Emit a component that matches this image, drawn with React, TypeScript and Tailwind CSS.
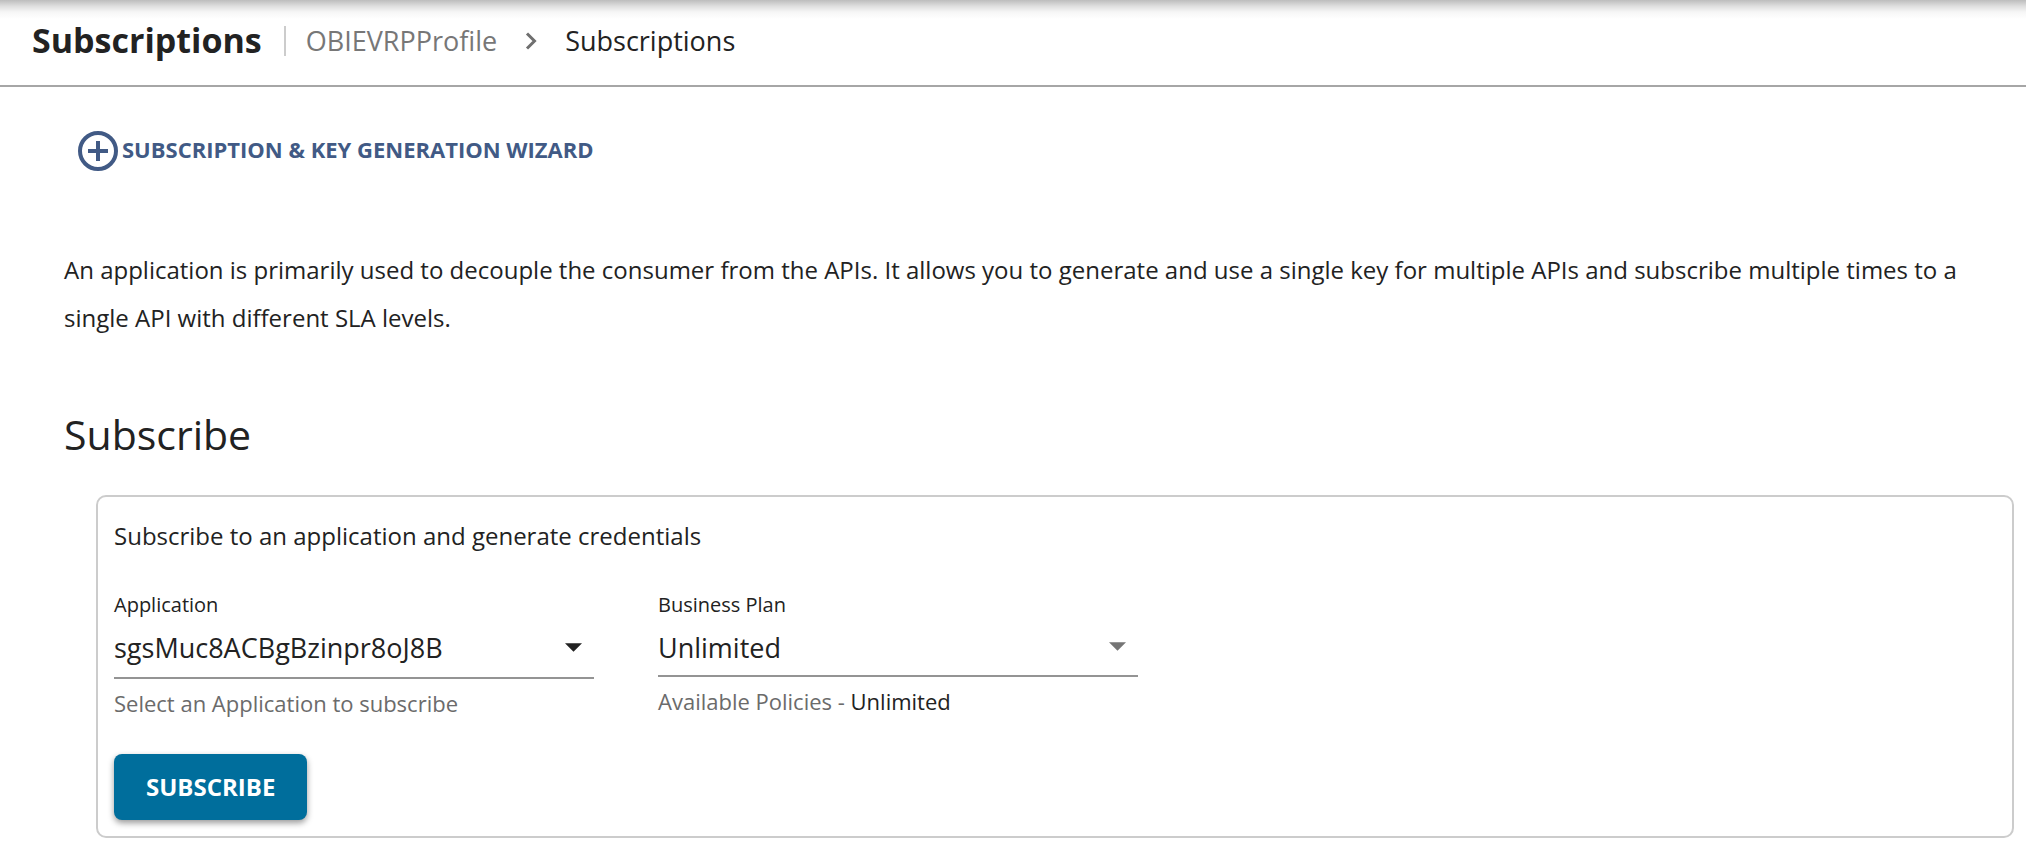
import type { ReactNode } from "react";

type SelectFieldProps = {
  id: string;
  label: string;
  options: string[];
  arrowClass: string;
  selectClass: string;
  helper: ReactNode;
};

function SelectField({ id, label, options, arrowClass, selectClass, helper }: SelectFieldProps) {
  return (
    <div className="w-full max-w-[480px]">
      <label htmlFor={id} className="block text-[20px] leading-8">
        {label}
      </label>
      <div className="grid items-center">
        <select
          id={id}
          aria-describedby={`${id}-helper`}
          className={`col-start-1 row-start-1 w-full appearance-none rounded-none border-b-2 border-[#949494] bg-transparent pr-12 text-[27px] leading-10 outline-none ${selectClass}`}
        >
          {options.map((option) => (
            <option key={option}>{option}</option>
          ))}
        </select>
        <svg
          viewBox="0 0 20 10"
          aria-hidden="true"
          className={`pointer-events-none col-start-1 row-start-1 mb-1.5 mr-3 h-[9px] w-[17px] justify-self-end ${arrowClass}`}
        >
          <path d="M0 0h20L10 10z" fill="currentColor" />
        </svg>
      </div>
      <p id={`${id}-helper`} className="mt-1.5 text-[22px] leading-9 text-[#6b6b6b]">
        {helper}
      </p>
    </div>
  );
}

export default function App() {
  return (
    <div className="min-h-screen bg-white font-['Open_Sans',sans-serif] text-[#222222]">
      <header className="flex h-[87px] items-start border-b-2 border-[#a6a6a6] bg-[linear-gradient(to_bottom,#bdbdbd_0px,#dedede_6px,#f6f6f6_12px,#ffffff_19px)] pl-8 pt-4">
        <h1 className="text-[34px] font-bold leading-12">Subscriptions</h1>
        <nav aria-label="Breadcrumb" className="ml-[22px] mt-2.5 flex h-[30px] items-center border-l-2 border-[#cccccc] pl-5 text-[27px]">
          <a href="#profile" className="text-[#777777]">
            OBIEVRPProfile
          </a>
          <svg viewBox="0 0 12 18" aria-hidden="true" className="mx-7 h-[18px] w-3 text-[#6f6f6f]">
            <path d="M2 1.5L9.5 9L2 16.5" fill="none" stroke="currentColor" strokeWidth="3" />
          </svg>
          <span aria-current="page">Subscriptions</span>
        </nav>
      </header>

      <main className="pl-16 pr-3 pt-11">
        <button type="button" className="ml-3.5 flex items-center gap-1 text-[22px] font-bold text-[#415a85]">
          <svg viewBox="0 0 40 40" aria-hidden="true" className="size-10">
            <circle cx="20" cy="20" r="18" fill="none" stroke="currentColor" strokeWidth="4" />
            <path d="M20 10v20M10 20h20" stroke="currentColor" strokeWidth="4" />
          </svg>
          <span className="pb-1 leading-9">SUBSCRIPTION &amp; KEY GENERATION WIZARD</span>
        </button>

        <p className="mt-[75px] pr-10 text-[24px] leading-12">
          An application is primarily used to decouple the consumer from the APIs. It allows you to generate and use a
          single key for multiple APIs and subscribe multiple times to a single API with different SLA levels.
        </p>

        <h2 className="mt-16 text-[41px] leading-14">Subscribe</h2>

        <section className="ml-8 mt-[33px] rounded-[10px] border-2 border-[#cccccc] p-4">
          <p className="pt-[7px] text-[24px] leading-8">Subscribe to an application and generate credentials</p>
          <form onSubmit={(event) => event.preventDefault()}>
            <div className="mt-[37px] flex gap-16">
              <SelectField
                id="application"
                label="Application"
                options={["sgsMuc8ACBgBzinpr8oJ8B"]}
                arrowClass="text-[#222222]"
                selectClass="h-[58px] pb-0.5"
                helper="Select an Application to subscribe"
              />
              <SelectField
                id="business-plan"
                label="Business Plan"
                options={["Unlimited"]}
                arrowClass="text-[#757575]"
                selectClass="h-[56px] pb-0"
                helper={
                  <>
                    Available Policies - <span className="text-[#222222]">Unlimited</span>
                  </>
                }
              />
            </div>
            <button
              type="submit"
              className="mt-[33px] block rounded-lg bg-[#006e9c] px-8 py-3 text-[24px] font-bold leading-[42px] text-white shadow-[0_3px_6px_rgba(0,0,0,0.4)]"
            >
              SUBSCRIBE
            </button>
          </form>
        </section>
      </main>
    </div>
  );
}
